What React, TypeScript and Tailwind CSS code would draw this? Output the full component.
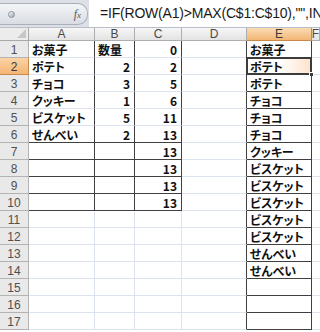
import React from 'react';

const cols = ['A', 'B', 'C', 'D', 'E', 'F'];

const dataA = ['お菓子', 'ポテト', 'チョコ', 'クッキー', 'ビスケット', 'せんべい'];
const dataB = ['数量', '2', '3', '1', '5', '2'];
const dataC = ['0', '2', '5', '6', '11', '13', '13', '13', '13', '13'];
const dataE = [
  'お菓子', 'ポテト', 'ポテト', 'チョコ', 'チョコ', 'チョコ', 'クッキー', 'ビスケット',
  'ビスケット', 'ビスケット', 'ビスケット', 'ビスケット', 'せんべい', 'せんべい', '', '', '',
];

const jp = {
  fontFamily: '"Noto Sans CJK JP", "Liberation Sans", sans-serif',
  fontFeatureSettings: '"palt"',
};

export default function App() {
  const rows = Array.from({ length: 17 }, (_, i) => i + 1);

  return (
    <div className="w-[320px] h-[332px] overflow-hidden bg-white select-none" style={{ fontFamily: '"Liberation Sans", Arial, sans-serif' }}>
      {/* Formula bar */}
      <div className="flex h-[28px] bg-[#dde1e7] border-b border-[#b9bec6]">
        <div className="w-[88px] h-[22px] mt-[3px] flex items-center justify-between pl-[8px] pr-[6px] rounded-r-[10px] bg-gradient-to-b from-[#f4f5f7] to-[#d9dde3] border border-l-0 border-[#a9b0ba]">
          <span className="w-[7px] h-[7px] rounded-full bg-gradient-to-br from-[#ffffff] to-[#9aa1ab] border border-[#8c939c]" />
          <span className="text-[12px] italic text-[#5a5a5a]" style={{ fontFamily: '"Liberation Serif", serif' }}>
            f<span className="text-[9px]">x</span>
          </span>
        </div>
        <div className="flex-1 bg-white ml-[1px] flex items-center pl-[11px] overflow-hidden whitespace-nowrap text-[14px] tracking-[-0.2px] text-[#1a1a1a]">
          =IF(ROW(A1)&gt;MAX(C$1:C$10),"",INDEX($A$1:$A$6,MATCH(ROW(A1)-1,C$1:C$10)+1))
        </div>
      </div>

      {/* Sheet */}
      <div className="grid grid-cols-[29px_66px_40px_47px_65px_65px_8px] grid-rows-[13px_repeat(17,17px)]">
        {/* corner */}
        <div className="relative bg-[#ececec] border-r border-b border-[#a8a8a8]">
          <div className="absolute right-[2px] bottom-[2px] w-0 h-0 border-l-[9px] border-l-transparent border-b-[9px] border-b-[#c6c6c6]" />
        </div>
        {cols.map((c) => (
          <div
            key={c}
            className={`flex items-center justify-center text-[12px] leading-none border-r border-b ${
              c === 'E'
                ? 'bg-gradient-to-b from-[#fadcb4] to-[#f2b673] text-[#3a3a3a] border-[#c88a4a]'
                : 'bg-gradient-to-b from-[#f7f7f7] to-[#e3e3e3] text-[#4a4a4a] border-[#aeaeae]'
            }`}
          >
            {c}
          </div>
        ))}

        {rows.map((r) => {
          const inTable = r <= 10;
          const a = dataA[r - 1] ?? '';
          const b = dataB[r - 1] ?? '';
          const c = dataC[r - 1] ?? '';
          const e = dataE[r - 1] ?? '';
          const darkBottomAC = r >= 6 && r <= 10;
          return (
            <React.Fragment key={r}>
              <div
                className={`flex items-end justify-center pb-[1px] text-[12px] leading-none border-r border-b ${
                  r === 2
                    ? 'bg-gradient-to-b from-[#fbd3a4] to-[#f4b574] text-[#3a3a3a] border-[#c88a4a]'
                    : 'bg-[#e9e9e9] text-[#505050] border-[#b3b3b3]'
                }`}
              >
                {r}
              </div>
              {/* A */}
              <div
                className={`flex items-end pl-[3px] pb-[1px] text-[12px] font-semibold leading-none text-[#111] border-r border-b ${
                  inTable ? 'border-r-[#404040]' : 'border-r-[#dde3ee]'
                } ${darkBottomAC ? 'border-b-[#404040]' : 'border-b-[#dde3ee]'}`}
                style={jp}
              >
                {a}
              </div>
              {/* B */}
              <div
                className={`flex items-end pb-[1px] text-[12px] font-semibold leading-none text-[#111] border-r border-b ${
                  r === 1 ? 'justify-start pl-[3px]' : 'justify-end pr-[4px]'
                } ${inTable ? 'border-r-[#404040]' : 'border-r-[#dde3ee]'} ${
                  darkBottomAC ? 'border-b-[#404040]' : 'border-b-[#dde3ee]'
                }`}
                style={jp}
              >
                {b}
              </div>
              {/* C */}
              <div
                className={`flex items-end justify-end pr-[4px] pb-[1px] text-[12px] font-semibold leading-none text-[#111] border-r border-b ${
                  inTable ? 'border-r-[#404040]' : 'border-r-[#dde3ee]'
                } ${darkBottomAC ? 'border-b-[#404040]' : 'border-b-[#dde3ee]'}`}
                style={jp}
              >
                {c}
              </div>
              {/* D */}
              <div className="border-r border-b border-r-[#404040] border-b-[#dde3ee]" />
              {/* E */}
              <div
                className={`relative flex items-end pl-[3px] pb-[1px] text-[12px] font-semibold leading-none text-[#111] whitespace-nowrap border-r border-b border-[#404040] ${
                  r === 2 ? 'bg-gradient-to-r from-white via-white to-[#fde3cc]' : ''
                }`}
                style={jp}
              >
                {e}
                {r === 2 && (
                  <>
                    <div className="absolute -left-[1px] -top-[1px] right-[-1px] bottom-[-1px] border-2 border-[#3c3c3c]" />
                    <div className="absolute right-[-3px] bottom-[-3px] w-[5px] h-[5px] bg-[#3c3c3c] border border-white" />
                  </>
                )}
              </div>
              {/* F */}
              <div className="border-b border-[#dde3ee]" />
            </React.Fragment>
          );
        })}
      </div>
    </div>
  );
}
